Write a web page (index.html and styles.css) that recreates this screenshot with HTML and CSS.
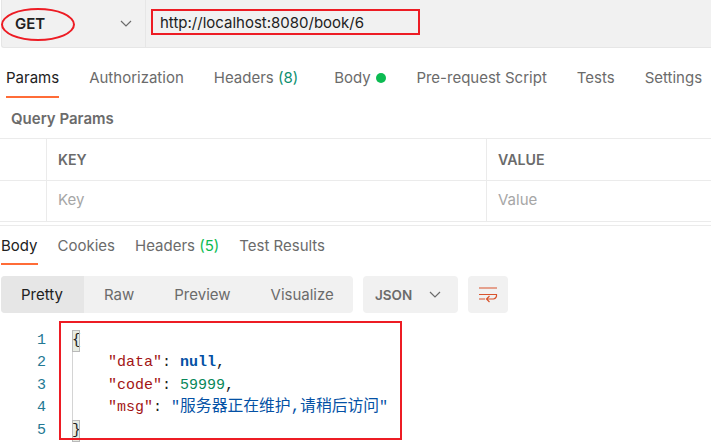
FILE: index.html
```html
<!DOCTYPE html>
<html lang="en">
<head>
<meta charset="utf-8">
<title>Postman request</title>
<link rel="stylesheet" href="styles.css">
</head>
<body>
<div class="page">
  <header class="urlbar">
    <div class="method">
      <span class="method-name">GET</span>
      <svg class="chev" width="12" height="8" viewBox="0 0 12 8"><path d="M1 1l5 5 5-5" fill="none" stroke="#6b6b6b" stroke-width="1.2"/></svg>
    </div>
    <div class="url">http://localhost:8080/book/6</div>
  </header>
  <nav class="tabs req-tabs">
    <span class="tab active">Params</span>
    <span class="tab t-auth">Authorization</span>
    <span class="tab t-head">Headers <em class="count-blue">(8)</em></span>
    <span class="tab t-body">Body <i class="dot"></i></span>
    <span class="tab t-pre">Pre-request Script</span>
    <span class="tab t-tests">Tests</span>
    <span class="tab t-set">Settings</span>
  </nav>
  <div class="qp">Query Params</div>
  <div class="table">
    <div class="row head">
      <div class="c0"></div>
      <div class="c1">KEY</div>
      <div class="c2">VALUE</div>
    </div>
    <div class="row ph">
      <div class="c0"></div>
      <div class="c1">Key</div>
      <div class="c2">Value</div>
    </div>
  </div>
  <nav class="tabs res-tabs">
    <span class="tab active">Body</span>
    <span class="tab">Cookies</span>
    <span class="tab">Headers <em class="count-green">(5)</em></span>
    <span class="tab">Test Results</span>
  </nav>
  <div class="toolbar">
    <div class="seg">
      <span class="seg-item on">Pretty</span>
      <span class="seg-item s-raw">Raw</span>
      <span class="seg-item s-pre">Preview</span>
      <span class="seg-item s-vis">Visualize</span>
    </div>
    <div class="json">
      <span>JSON</span>
      <svg width="12" height="8" viewBox="0 0 12 8"><path d="M1 1l5 5 5-5" fill="none" stroke="#6b6b6b" stroke-width="1.2"/></svg>
    </div>
    <div class="wrap">
      <svg width="20" height="18" viewBox="0 0 20 18"><path d="M1 2h18M1 8.500h17.500q.5 3.500-3 4.500H8.500M11.500 10l-3 3 3 3M1 13h6" fill="none" stroke="#d9532c" stroke-width="1.200"/></svg>
    </div>
  </div>
  <div class="code">
    <div class="gutter"><span>1</span><span>2</span><span>3</span><span>4</span><span>5</span></div>
    <div class="lines">
      <div class="line"><span class="br">{</span></div>
      <div class="line ind"><span class="k">"data"</span>: <span class="nul">null</span>,</div>
      <div class="line ind"><span class="k">"code"</span>: <span class="num">59999</span>,</div>
      <div class="line ind"><span class="k">"msg"</span>: <span class="str">"<span class="cjk">服务器正在维护,请稍后访问</span>"</span></div>
      <div class="line"><span class="br">}</span></div>
    </div>
  </div>
  <div class="mark mark-method"></div>
  <div class="mark mark-url"></div>
  <div class="mark mark-code"></div>
</div>
</body>
</html>
```
FILE: styles.css
```css
* { box-sizing: border-box; }
html, body { margin: 0; padding: 0; background: #fff; }
.page {
  position: relative;
  width: 711px;
  height: 444px;
  overflow: hidden;
  font-family: Inter, "Noto Sans", sans-serif;
  font-size: 15px;
  color: #6b6b6b;
}
.urlbar {
  display: flex;
  height: 48px;
  margin-left: 1px;
  background: #f1f1f1;
  border: 1px solid #e6e6e6;
  border-width: 0 0 1px 1px;
  border-bottom-left-radius: 3px;
}
.method {
  width: 144px;
  display: flex;
  align-items: center;
  justify-content: space-between;
  padding: 0 13px 0 13px;
  border-right: 1px solid #e6e6e6;
}
.method-name { font-weight: 600; font-size: 15px; color: #212121; }
.url {
  padding-left: 14px;
  line-height: 46px;
  color: #212121;
  font-size: 15px;
}
.tabs { display: flex; }
.tab { white-space: nowrap; }
.tab em { font-style: normal; }
.tab.active { color: #212121; box-shadow: inset 0 -2px 0 #ff6c37; }
.req-tabs { height: 50px; padding: 0 0 0 6px; }
.req-tabs .tab { height: 50px; line-height: 60px; }
.t-auth { margin-left: 30px; }
.t-head { margin-left: 30px; }
.t-body { margin-left: 36px; }
.t-pre { margin-left: 30.500px; }
.t-tests { margin-left: 30px; }
.t-set { margin-left: 30px; }
.count-blue { color: #0d8f6f; }
.count-green { color: #0cbb52; }
.dot {
  display: inline-block;
  width: 10px;
  height: 10px;
  margin-left: 1px;
  border-radius: 50%;
  background: #0cbb52;
}
.qp { height: 40px; padding-left: 11px; line-height: 42px; font-weight: 600; font-size: 15px; color: #6b6b6b; }
.table { border-top: 1px solid #ebebeb; border-bottom: 1px solid #ebebeb; }
.row { display: grid; grid-template-columns: 46px 440px 1fr; }
.row > div { padding-left: 11px; }
.row > .c1, .row > .c2 { border-left: 1px solid #ebebeb; }
.head { height: 42px; line-height: 41px; font-weight: 600; font-size: 14.2px; border-bottom: 1px solid #ebebeb; }
.ph { height: 40px; line-height: 37px; color: #a6a6a6; }
.res-tabs {
  gap: 20px;
  height: 40px;
  margin-top: 3px;
  padding-left: 1px;
  border-top: 1px solid #ebebeb;
}
.res-tabs .tab { height: 39px; line-height: 39px; }
.toolbar { display: flex; margin-top: 11px; margin-left: 1px; height: 37px; }
.seg {
  display: flex;
  width: 352px;
  background: #f1f1f1;
  border-radius: 4px;
  overflow: hidden;
  line-height: 37px;
}
.seg-item { display: block; }
.seg-item.on { width: 83px; padding-left: 20px; background: #e6e6e6; color: #212121; }
.s-raw { margin-left: 20px; }
.s-pre { margin-left: 40px; }
.s-vis { margin-left: 40px; }
.json {
  display: flex;
  align-items: center;
  justify-content: space-between;
  width: 95px;
  margin-left: 10px;
  padding: 0 17px 0 12px;
  background: #f1f1f1;
  border-radius: 4px;
  font-weight: 600;
  font-size: 13.500px;
}
.wrap {
  display: flex;
  align-items: center;
  justify-content: center;
  width: 40px;
  margin-left: 10px;
  background: #f1f1f1;
  border-radius: 4px;
}
.code {
  display: flex;
  margin-top: 16.500px;
  font-family: "Liberation Mono", "Noto Sans CJK SC", monospace;
  font-size: 15px;
  line-height: 22.5px;
  color: #212121;
}
.gutter { display: flex; flex-direction: column; width: 46px; text-align: right; color: #237893; }
.lines { margin-left: 26px; border-left: 1px solid #d4d4d4; }
.line { white-space: pre; height: 22.5px; }
.ind { padding-left: 35px; }
.br { display: inline-block; margin-left: -1px; background: #e8ece3; outline: 1px solid #b9b9b9; outline-offset: -1px; width: 8px; line-height: 22px; }
.k { color: #a31515; }
.nul { color: #0451a5; font-weight: 700; }
.num { color: #09885a; }
.str { color: #0451a5; }
.cjk { font-size: 15.800px; line-height: 20px; }
.mark { position: absolute; border: 2px solid #ed1c24; }
.mark-method { left: 1px; top: 8px; width: 74px; height: 33px; border-radius: 50%; }
.mark-url { left: 151px; top: 9px; width: 269px; height: 26px; }
.mark-code { left: 59px; top: 321px; width: 343px; height: 119px; }
```
